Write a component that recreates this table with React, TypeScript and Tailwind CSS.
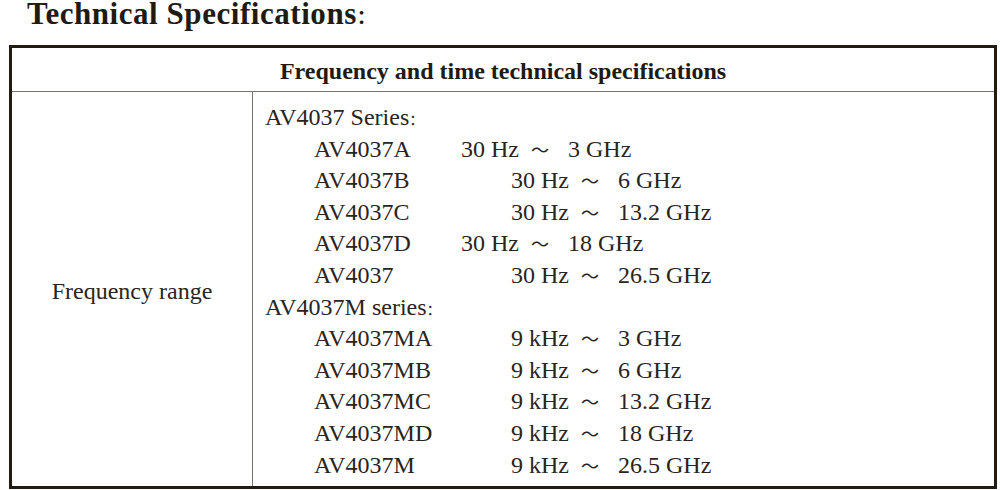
const serif = "font-['Liberation_Serif','Times_New_Roman','Noto_Sans_CJK_SC',serif]";
const cjk = "font-['Noto_Sans_CJK_SC',sans-serif]";

type Row = { model: string; from: string; to: string; wide: boolean };

const av4037: Row[] = [
  { model: "AV4037A", from: "30 Hz", to: "3 GHz", wide: false },
  { model: "AV4037B", from: "30 Hz", to: "6 GHz", wide: true },
  { model: "AV4037C", from: "30 Hz", to: "13.2 GHz", wide: true },
  { model: "AV4037D", from: "30 Hz", to: "18 GHz", wide: false },
  { model: "AV4037", from: "30 Hz", to: "26.5 GHz", wide: true },
];

const av4037m: Row[] = [
  { model: "AV4037MA", from: "9 kHz", to: "3 GHz", wide: true },
  { model: "AV4037MB", from: "9 kHz", to: "6 GHz", wide: true },
  { model: "AV4037MC", from: "9 kHz", to: "13.2 GHz", wide: true },
  { model: "AV4037MD", from: "9 kHz", to: "18 GHz", wide: true },
  { model: "AV4037M", from: "9 kHz", to: "26.5 GHz", wide: true },
];

// full-width colon, drawn a bit smaller like in the source document
function Colon({ className = "" }: { className?: string }) {
  return <span className={`${cjk} text-[0.62em] leading-none ${className}`}>：</span>;
}

function RangeRow({ row }: { row: Row }) {
  return (
    <div className="flex whitespace-pre pl-[49px]">
      <span className={row.wide ? "w-[197px] shrink-0" : "w-[147px] shrink-0"}>{row.model}</span>
      <span>{row.from}</span>
      <span className={`inline-block w-[49px] shrink-0 pl-[12px] text-[18px] ${cjk}`}>～</span>
      <span>{row.to}</span>
    </div>
  );
}

export default function App() {
  return (
    <div className={`h-[490px] w-[1000px] overflow-hidden bg-white text-[#2a241c] ${serif}`}>
      <h1 className="h-[45px] pl-[27px] pt-[2px] text-[31px] font-bold leading-[24px] tracking-[0.55px] text-[#1f1a12]">
        Technical Specifications<Colon className="font-bold" />
      </h1>

      <div className="ml-[9px] w-[988px] border-[3px] border-b-0 border-[#231b10]">
        <div className="flex h-[44px] items-center justify-center border-b border-[#75756b] pt-[3px] text-[24px] font-bold leading-none text-[#1f1a12]">
          Frequency and time technical specifications
        </div>

        <div className="flex h-[397px] border-b-[3px] border-[#231b10]">
          <div className="flex w-[241px] shrink-0 items-center justify-center border-r border-[#75756b] pt-[4px] text-[24px] leading-none">
            Frequency range
          </div>
          <div className="pl-[12px] pt-[10px] text-[24px] leading-[31.6px]">
            <div>
              AV4037 Series<Colon />
            </div>
            {av4037.map((r) => (
              <RangeRow key={r.model} row={r} />
            ))}
            <div>
              AV4037M series<Colon />
            </div>
            {av4037m.map((r) => (
              <RangeRow key={r.model} row={r} />
            ))}
          </div>
        </div>
      </div>
    </div>
  );
}
